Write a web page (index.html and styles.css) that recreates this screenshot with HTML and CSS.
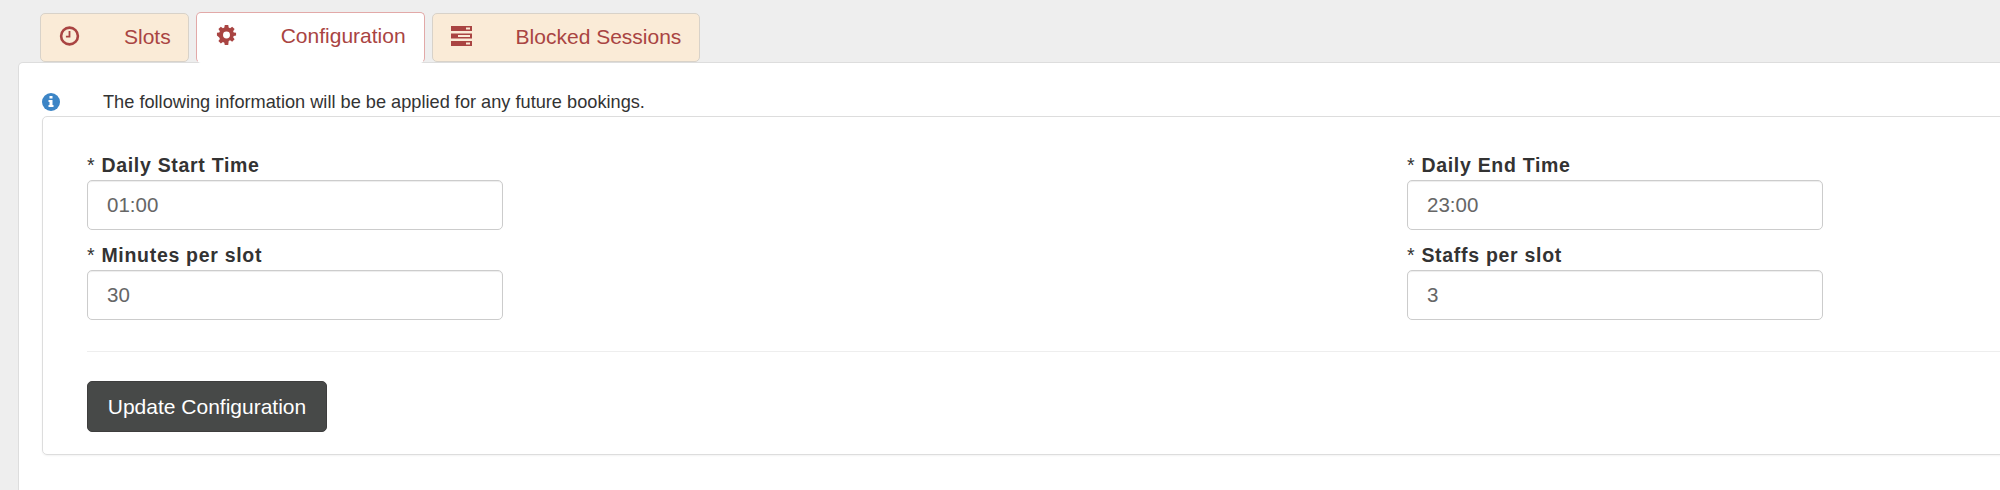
FILE: index.html
```html
<!DOCTYPE html>
<html lang="en">
<head>
    <meta charset="UTF-8">
    <title>Configuration</title>
    <link rel="stylesheet" href="styles.css">
</head>
<body>
    <nav class="tabs">
        <a class="tab tab-slots" href="#">
            <svg class="tab-icon" viewBox="0 0 20 20"><circle cx="10" cy="10" r="8.4" fill="none" stroke="currentColor" stroke-width="2.6"/><path d="M10 5v5.600H6.400" fill="none" stroke="currentColor" stroke-width="1.8"/></svg>
            <span>Slots</span>
        </a>
        <a class="tab tab-active" href="#">
            <svg class="tab-icon" viewBox="0 0 20 20"><path fill="currentColor" fill-rule="evenodd" d="M8 0h4l.5 2.900 1.600.7L16.500 1.900l2.800 2.800-1.700 2.400.7 1.600L21 9v3l-2.700.5-.7 1.600 1.700 2.400-2.800 2.800-2.400-1.700-1.600.7L12 23H8l-.5-2.700-1.600-.7-2.400 1.700-2.800-2.800 1.700-2.400-.7-1.600L-1 12V9l2.700-.3.7-1.600L.7 4.700 3.500 1.900l2.400 1.700 1.600-.7zM10 7.500a4 4 0 1 0 0 8 4 4 0 0 0 0-8z" transform="scale(.87) translate(1.500 0)"/></svg>
            <span>Configuration</span>
        </a>
        <a class="tab tab-blocked" href="#">
            <svg class="tab-icon" viewBox="0 0 21 20"><path fill="currentColor" fill-rule="evenodd" d="M0 0h21v5H0zM15 1.500v2h4v-2zM0 7.500h21v5H0zM7 9v2h12V9zM0 15h21v5H0zM15 16.500v2h4v-2z"/></svg>
            <span>Blocked Sessions</span>
        </a>
    </nav>

    <main class="panel">
        <p class="notice">
            <svg class="notice-icon" viewBox="0 0 18 18"><circle cx="9" cy="9" r="9" fill="#3c85c6"/><path fill="#fff" d="M7.500 3h3v2.500h-3zM6.500 7h4v5h1v2h-5v-2h1V9h-1z"/></svg>
            <span>The following information will be be applied for any future bookings.</span>
        </p>
        <form class="config-box">
            <div class="fields">
                <div class="field">
                    <label for="startTime"><i>*</i> Daily Start Time</label>
                    <input type="text" id="startTime" value="01:00">
                </div>
                <div class="field">
                    <label for="endTime"><i>*</i> Daily End Time</label>
                    <input type="text" id="endTime" value="23:00">
                </div>
                <div class="field">
                    <label for="minutes"><i>*</i> Minutes per slot</label>
                    <input type="text" id="minutes" value="30">
                </div>
                <div class="field">
                    <label for="staffs"><i>*</i> Staffs per slot</label>
                    <input type="text" id="staffs" value="3">
                </div>
            </div>
            <hr class="divider">
            <button type="button" class="update-btn">Update Configuration</button>
        </form>
    </main>
</body>
</html>
```

FILE: styles.css
```css
body {
    margin: 0;
    height: 490px;
    overflow: hidden;
    background-color: #eeeeee;
    font-family: "Liberation Sans", Arial, sans-serif;
    color: #333333;
}
.tabs {
    display: flex;
    gap: 7px;
    padding: 13px 0 0 40px;
    height: 49px;
    box-sizing: border-box;
}
.tab {
    display: flex;
    align-items: flex-start;
    box-sizing: border-box;
    height: 49px;
    padding: 0 17px 0 18px;
    background-color: #faebd7;
    border: 1px solid #d8d2c9;
    border-radius: 5px;
    color: #a94442;
    font-size: 21px;
    line-height: 46px;
    text-decoration: none;
}
.tab-icon {
    flex: none;
    width: 21px;
    height: 20px;
    margin: 12px 44px 0 0;
}
.tab-active {
    height: 51px;
    margin-top: -1px;
    padding: 0 18px 0 19px;
    position: relative;
    z-index: 1;
    background-color: #ffffff;
    border-color: #e2a9a8;
    border-bottom-color: #ffffff;
}
.tab-blocked {
    padding-right: 18px;
}
.panel {
    box-sizing: border-box;
    margin: 13px -40px 0 18px;
    height: 428px;
    padding: 27px 0 0 23px;
    background-color: #ffffff;
    border: 1px solid #dddddd;
    border-bottom: 0;
    border-radius: 5px 5px 0 0;
}
.notice {
    display: flex;
    align-items: center;
    height: 24px;
    margin: 0;
    font-size: 18.2px;
    color: #333333;
}
.notice-icon {
    flex: none;
    width: 18px;
    height: 18px;
    margin-right: 43px;
}
.config-box {
    box-sizing: border-box;
    height: 339px;
    margin-top: 2px;
    padding: 36px 0 0 44px;
    border: 1px solid #dddddd;
    border-radius: 5px;
    box-shadow: 0 1px 2px rgba(0, 0, 0, 0.05);
}
.fields {
    display: grid;
    grid-template-columns: 1320px 1fr;
    row-gap: 13px;
}
.field label {
    display: block;
    height: 27px;
    font-size: 19.5px;
    font-weight: bold;
    letter-spacing: 0.7px;
    line-height: 24px;
}
.field label i {
    font-style: normal;
    font-weight: normal;
}
.field input {
    display: block;
    box-sizing: border-box;
    width: 416px;
    height: 50px;
    padding: 0 19px;
    border: 1px solid #cccccc;
    border-radius: 5px;
    box-shadow: inset 0 1px 1px rgba(0, 0, 0, 0.075);
    color: #666666;
    font-family: inherit;
    font-size: 20.5px;
}
.divider {
    height: 1px;
    margin: 31px 0 29px;
    border: 0;
    background-color: #eeeeee;
}
.update-btn {
    display: block;
    box-sizing: border-box;
    width: 240px;
    height: 51px;
    padding: 0;
    background-color: #474948;
    border: 1px solid #3e3e3e;
    border-radius: 5px;
    color: #ffffff;
    font-family: inherit;
    font-size: 21px;
}
```
